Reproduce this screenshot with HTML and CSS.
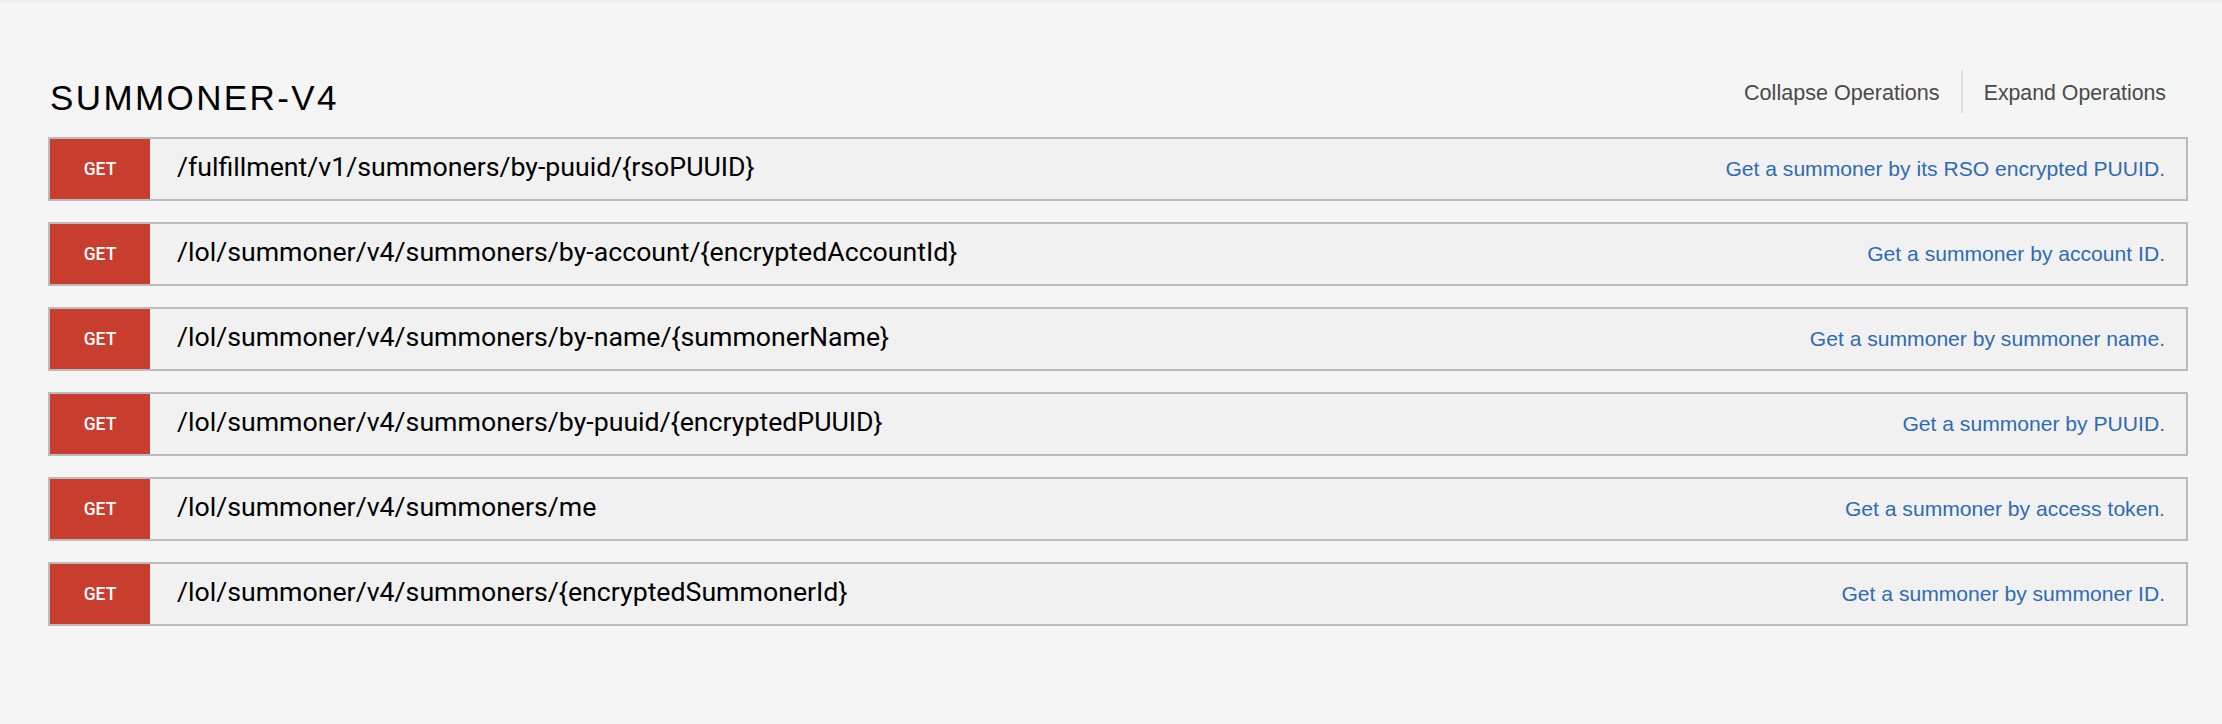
FILE: index.html
```html
<!DOCTYPE html>
<html lang="en">
<head>
<meta charset="utf-8">
<title>SUMMONER-V4</title>
<link rel="stylesheet" href="styles.css">
</head>
<body>
<main class="page">
  <section class="resource">
    <header class="resource-head">
      <h2 class="resource-title">SUMMONER-V4</h2>
      <nav class="ops">
        <a class="op-link">Collapse Operations</a>
        <a class="op-link op-link-last">Expand Operations</a>
      </nav>
    </header>
    <ul class="endpoints">
      <li class="endpoint">
        <span class="method">GET</span>
        <span class="path">/fulfillment/v1/summoners/by-puuid/{rsoPUUID}</span>
        <span class="desc">Get a summoner by its RSO encrypted PUUID.</span>
      </li>
      <li class="endpoint">
        <span class="method">GET</span>
        <span class="path">/lol/summoner/v4/summoners/by-account/{encryptedAccountId}</span>
        <span class="desc">Get a summoner by account ID.</span>
      </li>
      <li class="endpoint">
        <span class="method">GET</span>
        <span class="path">/lol/summoner/v4/summoners/by-name/{summonerName}</span>
        <span class="desc">Get a summoner by summoner name.</span>
      </li>
      <li class="endpoint">
        <span class="method">GET</span>
        <span class="path">/lol/summoner/v4/summoners/by-puuid/{encryptedPUUID}</span>
        <span class="desc">Get a summoner by PUUID.</span>
      </li>
      <li class="endpoint">
        <span class="method">GET</span>
        <span class="path">/lol/summoner/v4/summoners/me</span>
        <span class="desc">Get a summoner by access token.</span>
      </li>
      <li class="endpoint">
        <span class="method">GET</span>
        <span class="path">/lol/summoner/v4/summoners/{encryptedSummonerId}</span>
        <span class="desc">Get a summoner by summoner ID.</span>
      </li>
    </ul>
  </section>
</main>
</body>
</html>
```
FILE: styles.css
```css
html, body {
  margin: 0;
  padding: 0;
}

body {
  background: linear-gradient(to bottom, #ececec 0, #f5f5f5 4px, #f5f5f5 100%);
  background-color: #f5f5f5;
  min-height: 724px;
  font-family: "Liberation Sans", Arial, sans-serif;
  color: #000;
}

.page {
  padding: 70px 34px 0 48px;
}

.resource-head {
  display: flex;
  justify-content: space-between;
  align-items: flex-start;
  height: 48px;
  padding-right: 22px;
  margin-bottom: 19px;
}

.resource-title {
  margin: 8px 0 0 2px;
  font-family: "Liberation Sans", Arial, sans-serif;
  font-weight: 400;
  font-size: 35px;
  line-height: 40px;
  letter-spacing: 2.4px;
  color: #000;
}

.ops {
  display: flex;
}

.op-link {
  display: block;
  font-size: 21.6px;
  line-height: 24px;
  padding: 11px 21px 8px 21px;
  color: #4a4a4a;
  cursor: pointer;
}

.op-link-last {
  border-left: 2px solid #dedede;
  padding-right: 0;
  padding-left: 21px;
  font-size: 21.3px;
}

.endpoints {
  list-style: none;
  margin: 0;
  padding: 0;
  display: flex;
  flex-direction: column;
  gap: 21px;
}

.endpoint {
  display: flex;
  align-items: center;
  height: 60px;
  border: 2px solid #bbbbbb;
  background: #f1f1f1;
}

.method {
  flex: 0 0 100px;
  height: 60px;
  line-height: 60px;
  text-align: center;
  background: #c93d2e;
  color: #fff;
  font-family: Roboto, "Liberation Sans", sans-serif;
  font-weight: 500;
  font-size: 17.5px;
}

.path {
  flex: 1 1 auto;
  padding-left: 27px;
  padding-bottom: 5px;
  font-family: Roboto, "Liberation Sans", sans-serif;
  font-size: 26.7px;
  line-height: 32px;
  color: #000;
  white-space: nowrap;
}

.desc {
  flex: 0 0 auto;
  padding-right: 21px;
  font-size: 21.1px;
  line-height: 24px;
  color: #2f6ab4;
  white-space: nowrap;
}
```
